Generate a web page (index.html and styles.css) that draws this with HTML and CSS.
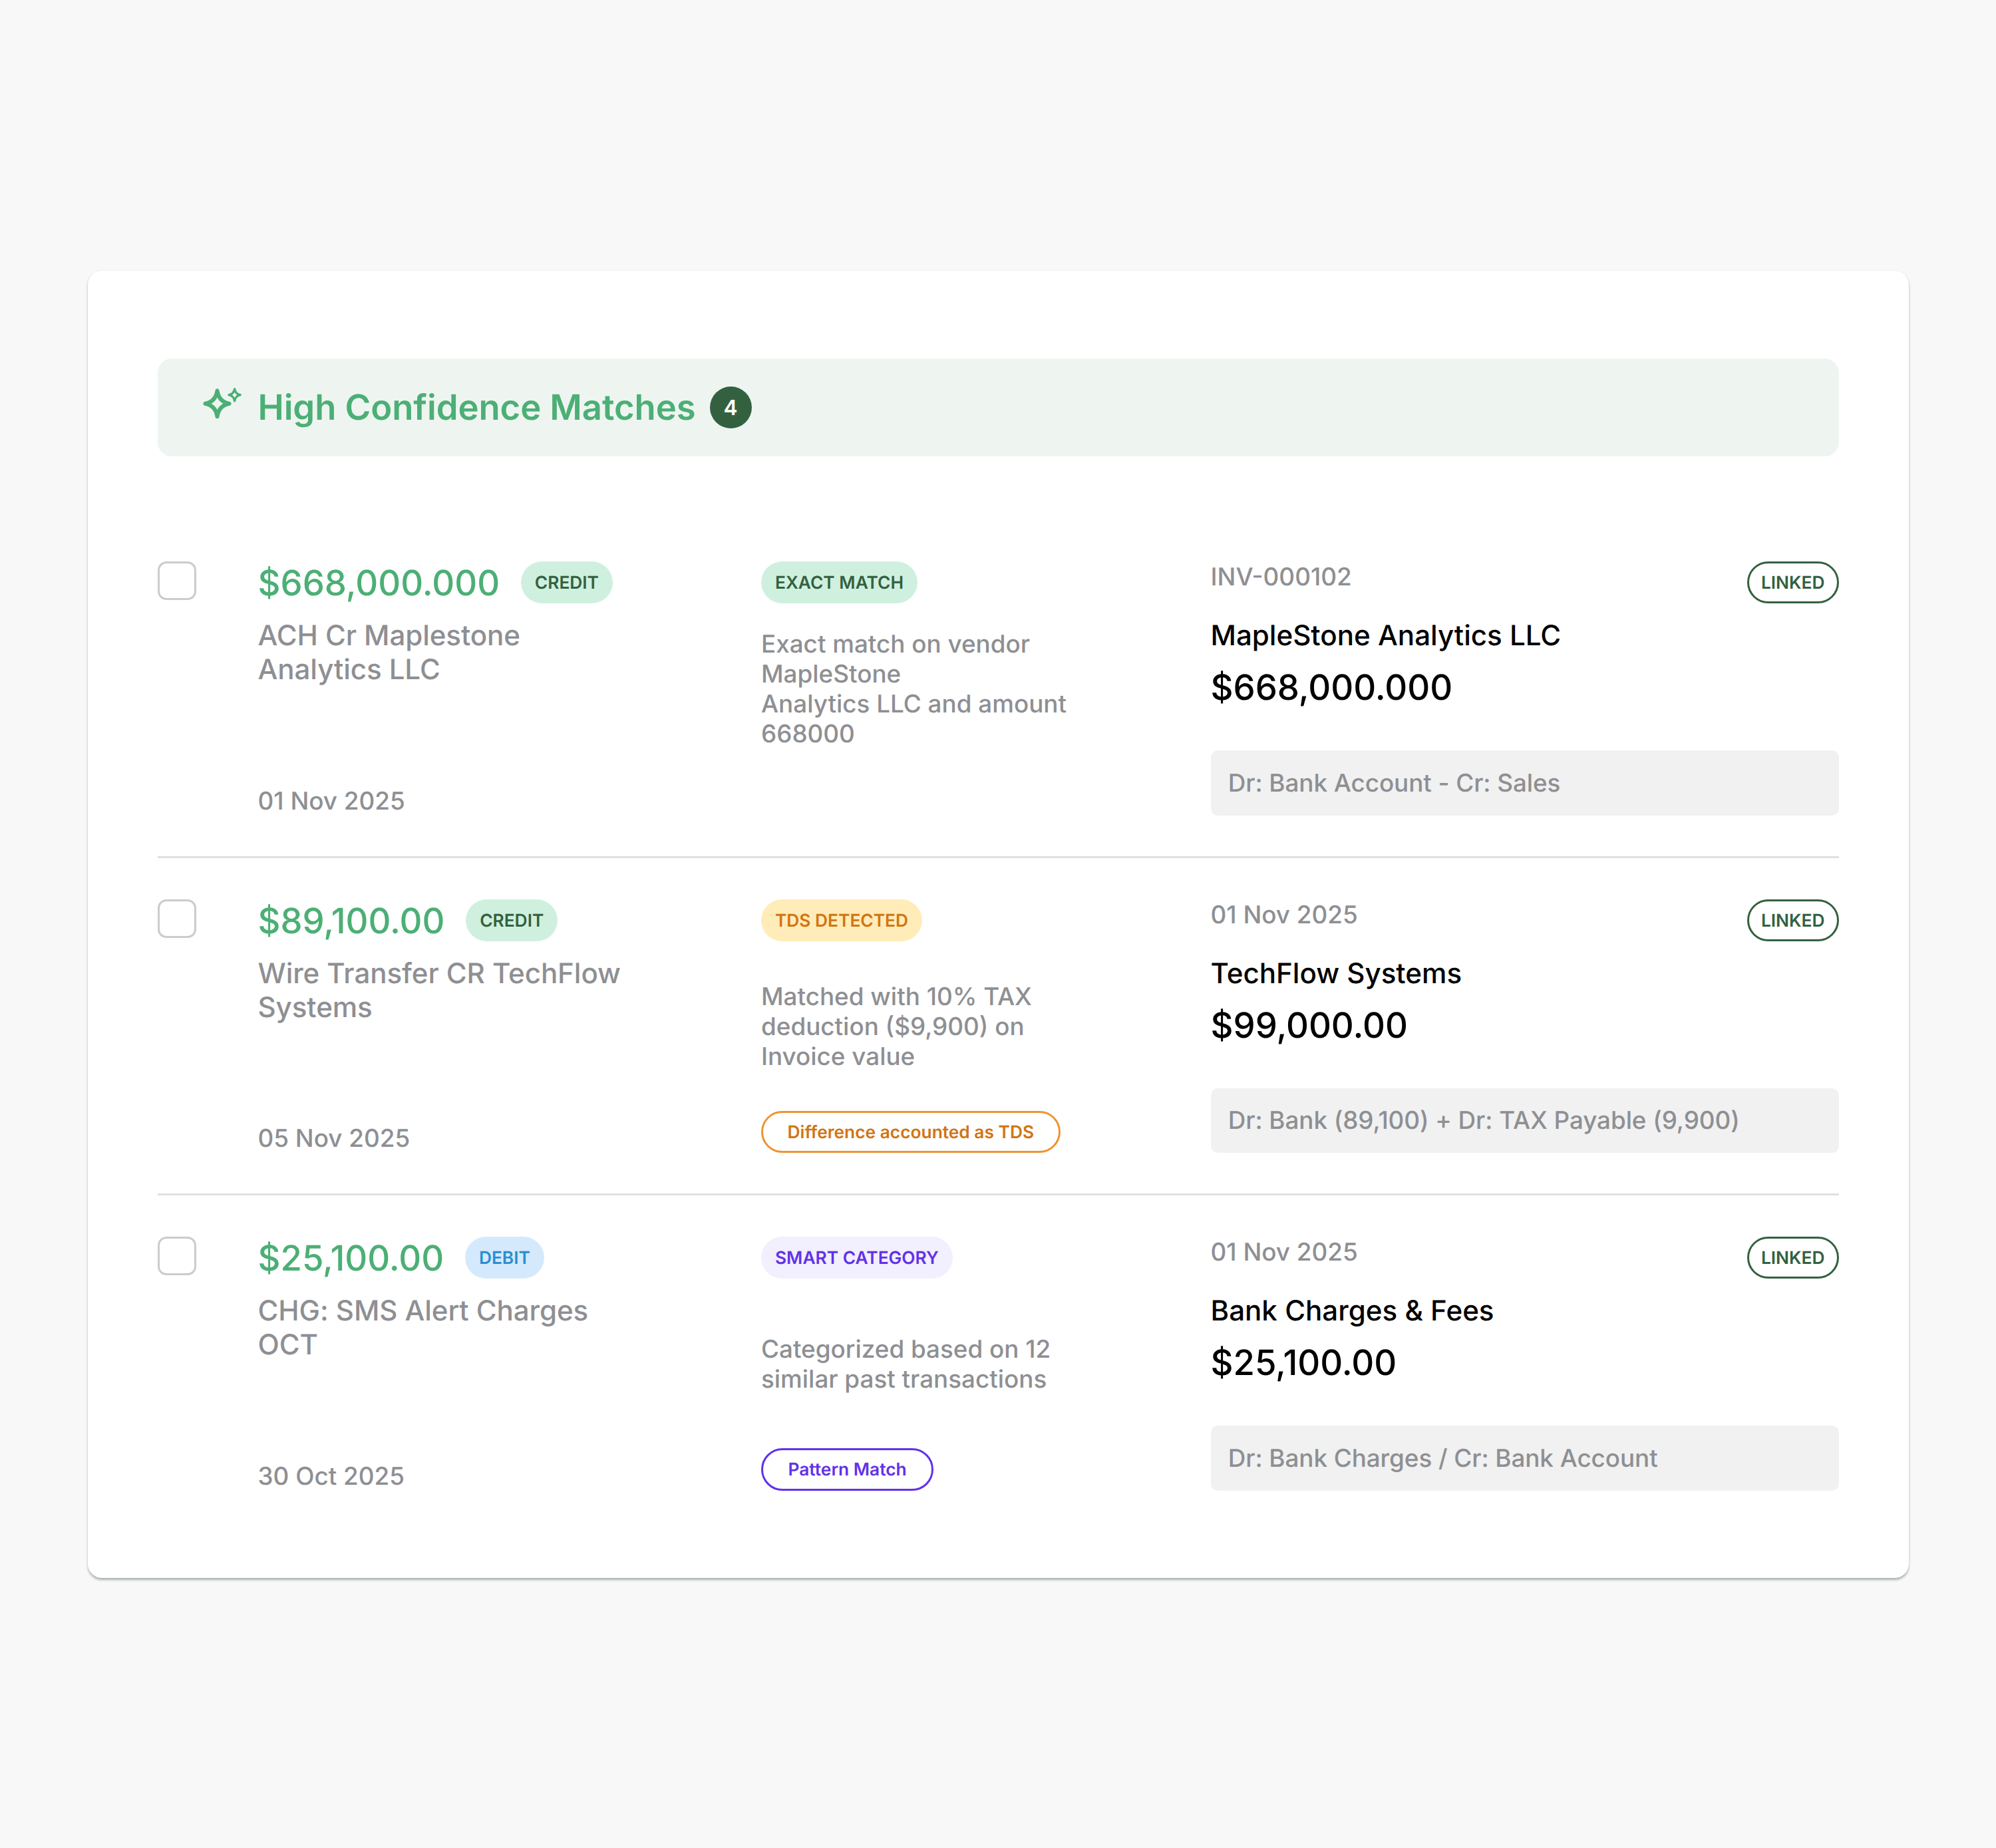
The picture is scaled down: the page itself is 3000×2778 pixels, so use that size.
FILE: index.html
```html
<!DOCTYPE html>
<html lang="en">
<head>
<meta charset="UTF-8">
<title>High Confidence Matches</title>
<link rel="stylesheet" href="styles.css">
</head>
<body>
<div class="card">
    <div class="card-header">
        <svg class="sparkle" viewBox="0 0 58 46" fill="none" stroke="currentColor" stroke-linejoin="round">
            <path stroke-width="6" d="M21.5 4.2C23.1 15.2 28.8 21.8 39.6 23.7C28.8 25.6 23.1 32.2 21.5 43.2C19.9 32.2 14.2 25.6 3.4 23.7C14.2 21.8 19.9 15.2 21.5 4.2Z"/>
            <path stroke-width="3.4" d="M47.6 1.8C48.4 6.9 51.2 9.8 56.2 10.7C51.2 11.6 48.4 14.5 47.6 19.8C46.8 14.5 44 11.6 39 10.7C44 9.8 46.8 6.9 47.6 1.8Z"/>
        </svg>
        <h2>High Confidence Matches</h2>
        <span class="count">4</span>
    </div>

    <div class="row">
        <div class="checkbox"></div>
        <div class="bank">
            <div class="amount-line">
                <span class="amount green">$668,000.000</span>
                <span class="pill credit">CREDIT</span>
            </div>
            <p class="description">ACH Cr Maplestone Analytics LLC</p>
            <p class="date">01 Nov 2025</p>
        </div>
        <div class="reason">
            <span class="pill exact">EXACT MATCH</span>
            <p class="note">Exact match on vendor MapleStone<br>Analytics LLC and amount 668000</p>
            <span class="pill-space"></span>
        </div>
        <div class="record">
            <div class="record-top">
                <span class="ref">INV-000102</span>
                <span class="pill linked">LINKED</span>
            </div>
            <p class="vendor">MapleStone Analytics LLC</p>
            <p class="amount">$668,000.000</p>
            <p class="journal">Dr: Bank Account - Cr: Sales</p>
        </div>
    </div>

    <div class="row">
        <div class="checkbox"></div>
        <div class="bank">
            <div class="amount-line">
                <span class="amount green">$89,100.00</span>
                <span class="pill credit">CREDIT</span>
            </div>
            <p class="description">Wire Transfer CR TechFlow Systems</p>
            <p class="date">05 Nov 2025</p>
        </div>
        <div class="reason">
            <span class="pill tds">TDS DETECTED</span>
            <p class="note">Matched with 10% TAX deduction ($9,900) on Invoice value</p>
            <span class="pill outline orange">Difference accounted as TDS</span>
        </div>
        <div class="record">
            <div class="record-top">
                <span class="ref">01 Nov 2025</span>
                <span class="pill linked">LINKED</span>
            </div>
            <p class="vendor">TechFlow Systems</p>
            <p class="amount">$99,000.00</p>
            <p class="journal">Dr: Bank (89,100) + Dr: TAX Payable (9,900)</p>
        </div>
    </div>

    <div class="row">
        <div class="checkbox"></div>
        <div class="bank">
            <div class="amount-line">
                <span class="amount green">$25,100.00</span>
                <span class="pill debit">DEBIT</span>
            </div>
            <p class="description">CHG: SMS Alert Charges OCT</p>
            <p class="date">30 Oct 2025</p>
        </div>
        <div class="reason">
            <span class="pill smart">SMART CATEGORY</span>
            <p class="note">Categorized based on 12 similar past transactions</p>
            <span class="pill outline purple">Pattern Match</span>
        </div>
        <div class="record">
            <div class="record-top">
                <span class="ref">01 Nov 2025</span>
                <span class="pill linked">LINKED</span>
            </div>
            <p class="vendor">Bank Charges &amp; Fees</p>
            <p class="amount">$25,100.00</p>
            <p class="journal">Dr: Bank Charges / Cr: Bank Account</p>
        </div>
    </div>
</div>
</body>
</html>
```

FILE: styles.css
```css
* {
    box-sizing: border-box;
}

body {
    margin: 0;
    min-height: 2778px;
    padding: 407px 131.5px 0 132px;
    background-color: #f8f8f8;
    font-family: Inter, sans-serif;
    font-weight: 500;
    color: #000;
    text-rendering: geometricPrecision;
}

h2, p {
    margin: 0;
}

.card {
    height: 1965px;
    padding: 131.5px 105px 0;
    background-color: white;
    border-radius: 21px;
    box-shadow: 0 2.6px 3.5px rgba(20, 45, 35, 0.34);
}

.card-header {
    display: flex;
    align-items: center;
    height: 147.5px;
    margin-bottom: 96px;
    padding-left: 68px;
    background-color: #eef5f1;
    border-radius: 21px;
    color: #4caf75;
}

.sparkle {
    width: 58px;
    height: 46px;
    margin: 0 24.5px 12px 0;
}

h2 {
    padding-top: 2px;
    font-size: 52.63px;
    line-height: 63.7px;
    font-weight: 600;
    letter-spacing: -0.08px;
}

.count {
    width: 63.2px;
    height: 63.2px;
    margin-left: 21px;
    border-radius: 50%;
    background-color: #33613f;
    color: white;
    font-size: 31.58px;
    line-height: 63.2px;
    font-weight: 600;
    text-align: center;
}

.row {
    display: grid;
    grid-template-columns: 150.5px 756.5px 675.5px 1fr;
    height: 507.5px;
    padding: 62px 0 61px;
    border-bottom: 3px solid #e0e0e0;
}

.row:last-child {
    border-bottom: none;
    padding-bottom: 64px;
}

.checkbox {
    width: 58px;
    height: 58px;
    border: 3px solid #ccc;
    border-radius: 13px;
}

.bank, .reason, .record {
    display: flex;
    flex-direction: column;
}

.amount-line {
    display: flex;
    align-items: center;
    height: 63.2px;
}

.amount {
    font-size: 52.63px;
    line-height: 64px;
}

.green {
    padding-top: 1px;
    color: #4caf75;
    margin-right: 31.6px;
}

.description {
    width: 570px;
    margin-top: 23px;
    color: #8e8f93;
    font-size: 42.1px;
    line-height: 51px;
    letter-spacing: -0.08px;
}

.date {
    margin: auto 0 -1px;
}

.date, .note, .ref, .journal {
    color: #8e8f93;
    font-size: 36.84px;
    line-height: 44.8px;
}

.ref {
    padding-top: 1px;
}

.reason {
    justify-content: space-between;
    align-items: flex-start;
}

.note {
    width: 474px;
    padding-top: 2px;
}

.pill {
    height: 63.2px;
    padding: 0 21px;
    border-radius: 32px;
    font-size: 26.32px;
    line-height: 66px;
    font-weight: 600;
    white-space: nowrap;
}

/* keeps the note centred when a row has no second tag */
.pill-space {
    height: 63.2px;
}

.credit, .exact {
    background-color: #d0f0df;
    color: #33613f;
}

.debit {
    background-color: #d5e9fd;
    color: #2a8fd0;
}

.tds {
    background-color: #ffecb8;
    color: #d17513;
}

.smart {
    background-color: #f2effe;
    color: #6231e9;
}

.linked {
    padding: 0 18px;
    border: 3px solid #33613f;
    color: #33613f;
    line-height: 60px;
}

.outline {
    padding: 0 36.5px;
    border: 3px solid;
    line-height: 60px;
}

.orange {
    border-color: #ee9430;
    color: #d17513;
}

.purple {
    padding: 0 37.5px;
    border-color: #6231e9;
    color: #6231e9;
}

.record-top {
    display: flex;
    justify-content: space-between;
    align-items: flex-start;
}

.vendor {
    margin: 23px 0 20px;
    font-size: 42.1px;
    line-height: 51px;
}

.journal {
    margin-top: auto;
    padding: 26.8px 26.3px 25.8px;
    border-radius: 10.5px;
    background-color: #f1f1f1;
    letter-spacing: -0.06px;
}
```
